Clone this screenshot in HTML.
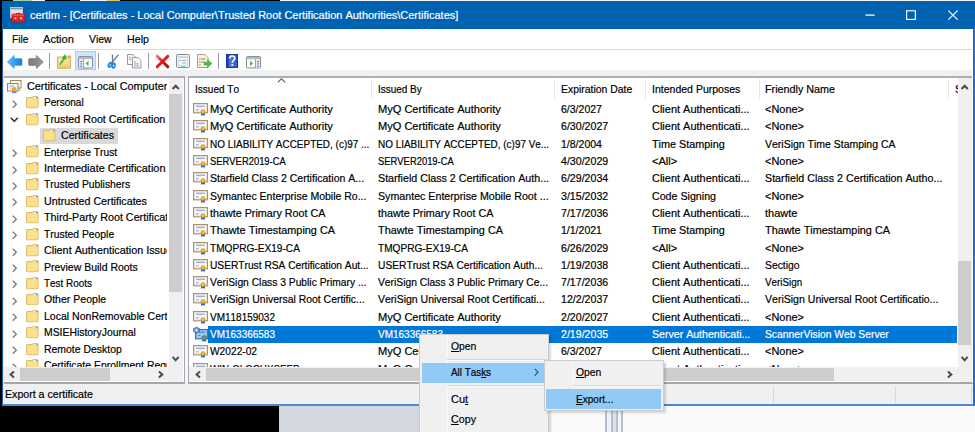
<!DOCTYPE html><html><head><meta charset="utf-8"><style>
html,body{margin:0;padding:0;width:975px;height:432px;overflow:hidden;background:#000}
#r{position:absolute;left:0;top:0;width:975px;height:432px;overflow:hidden;font-family:"Liberation Sans", sans-serif;font-size:11.5px;color:#000}
.t{position:absolute;white-space:nowrap;line-height:16px;font-kerning:none;transform-origin:0 0;-webkit-text-stroke:0.2px currentColor}
.clip{position:absolute;overflow:hidden}
svg{position:absolute;overflow:visible}
</style></head><body><div id="r"><div style="position:absolute;left:0px;top:0px;width:975px;height:432px;background:#000"></div>
<div style="position:absolute;left:279px;top:405px;width:140px;height:27px;background:#d3d7de"></div>
<div style="position:absolute;left:548px;top:405px;width:427px;height:27px;background:#fafafa"></div>
<div style="position:absolute;left:605px;top:411px;width:18px;height:21px;background:#eef3fa"></div>
<div style="position:absolute;left:605.2px;top:411px;width:1.7px;height:21px;background:#b4bfcf"></div>
<div style="position:absolute;left:611px;top:411px;width:1.7px;height:21px;background:#b4bfcf"></div>
<div style="position:absolute;left:616px;top:411px;width:1.7px;height:21px;background:#b4bfcf"></div>
<div style="position:absolute;left:621px;top:411px;width:1.7px;height:21px;background:#b4bfcf"></div>
<div style="position:absolute;left:612.5px;top:411px;width:3.5px;height:21px;background:#d8e2ee"></div>
<div style="position:absolute;left:2px;top:1px;width:973px;height:404px;background:#f0f0f0"></div>
<div style="position:absolute;left:2px;top:1px;width:1px;height:404px;background:#1a5fa8"></div>
<div style="position:absolute;left:2px;top:1px;width:973px;height:28px;background:#0063b1"></div>
<div style="position:absolute;left:13px;top:0px;width:19px;height:1px;background:#9ed4a4"></div>
<div style="position:absolute;left:32px;top:0px;width:13px;height:1px;background:#f4f4f4"></div>
<div style="position:absolute;left:80px;top:0px;width:27px;height:1px;background:#f4f4f4"></div>
<div style="position:absolute;left:107px;top:0px;width:13px;height:1px;background:#f0c050"></div>
<div style="position:absolute;left:280px;top:0px;width:695px;height:1px;background:#f4f4f4"></div>
<svg style="left:10px;top:7px" width="16" height="16" viewBox="0 0 16 16"><rect x="0.3" y="0.3" width="12.4" height="10.6" fill="#eef0f4" stroke="#c8ccd4" stroke-width="0.6"/><rect x="0.6" y="1" width="11.8" height="1.4" fill="#8890a0"/><rect x="1.2" y="3.6" width="10.5" height="0.6" fill="#b8c0cc"/><rect x="1.2" y="5.4" width="4" height="0.6" fill="#c0c8d4"/><path d="M5.2 7.2 Q8.3 4.8 11.4 7.2" fill="none" stroke="#404040" stroke-width="1"/><rect x="1.9" y="7" width="12.7" height="8" rx="0.8" fill="#e02424" stroke="#a81414" stroke-width="0.7"/><rect x="2.4" y="7.4" width="11.7" height="1.4" fill="#f05050"/><circle cx="5.5" cy="11.3" r="1" fill="#d8e8e8"/><circle cx="11" cy="11.3" r="1" fill="#d8e8e8"/></svg>
<div class="t" style="left:30px;top:7.33px;transform:scaleX(0.9546);color:#fff">certlm - [Certificates - Local Computer\Trusted Root Certification Authorities\Certificates]</div>
<svg style="left:860px;top:8px" width="110" height="16" viewBox="0 0 110 16"><rect x="5.5" y="6.4" width="9.2" height="1.4" fill="#e8f0fa"/><rect x="46.6" y="2.8" width="8.8" height="8.6" fill="none" stroke="#fff" stroke-width="1.15"/><path d="M88.3 2.6 L97.6 11.6 M97.6 2.6 L88.3 11.6" stroke="#fff" stroke-width="1.2"/></svg>
<div style="position:absolute;left:3px;top:29px;width:970px;height:20px;background:#fff"></div>
<div style="position:absolute;left:3px;top:49px;width:970px;height:1px;background:#d9d9d9"></div>
<div class="t" style="left:12px;top:30.53px;transform:scaleX(0.8886);">File</div>
<div class="t" style="left:43px;top:30.53px;transform:scaleX(0.9683);">Action</div>
<div class="t" style="left:89px;top:30.53px;transform:scaleX(0.9054);">View</div>
<div class="t" style="left:127px;top:30.53px;transform:scaleX(0.9287);">Help</div>
<div style="position:absolute;left:3px;top:50px;width:970px;height:20px;background:#fff"></div>
<div style="position:absolute;left:3px;top:70px;width:970px;height:6px;background:#f0f0f0"></div>
<div style="position:absolute;left:75px;top:51px;width:21px;height:19px;background:#cce8ff;border:1px solid #99d1ff;box-sizing:border-box"></div>
<div style="position:absolute;left:48.5px;top:53px;width:1.2px;height:16px;background:#9a9a9a"></div>
<div style="position:absolute;left:97.5px;top:53px;width:1.2px;height:16px;background:#9a9a9a"></div>
<div style="position:absolute;left:147.5px;top:53px;width:1.2px;height:16px;background:#9a9a9a"></div>
<div style="position:absolute;left:217.5px;top:53px;width:1.2px;height:16px;background:#9a9a9a"></div>
<svg style="left:0;top:0" width="0" height="0"><defs><linearGradient id="gb" x1="0" x2="1" y1="0" y2="0"><stop offset="0" stop-color="#5cc0fa"/><stop offset="1" stop-color="#1a78d8"/></linearGradient><linearGradient id="gg" x1="0" x2="1"><stop offset="0" stop-color="#7a7a7a"/><stop offset="1" stop-color="#9a9a9a"/></linearGradient><linearGradient id="gf" x1="0" x2="0" y1="0" y2="1"><stop offset="0" stop-color="#fdeab0"/><stop offset="1" stop-color="#f2cc6a"/></linearGradient><linearGradient id="gr" x1="0" x2="1" y1="0" y2="1"><stop offset="0" stop-color="#f27070"/><stop offset="0.5" stop-color="#e21a1a"/><stop offset="1" stop-color="#b00808"/></linearGradient><linearGradient id="gh" x1="0" x2="1"><stop offset="0" stop-color="#1a3aa8"/><stop offset="0.25" stop-color="#2a4ec0"/><stop offset="0.3" stop-color="#4a78e0"/><stop offset="1" stop-color="#2e58c8"/></linearGradient></defs></svg>
<svg style="left:7px;top:54.5px" width="16" height="14" viewBox="0 0 16 14"><path d="M0.3 7 L7.2 0.4 V3.6 H14 Q15 3.6 15 4.6 V9.4 Q15 10.4 14 10.4 H7.2 V13.6 Z" fill="url(#gb)" stroke="#3a98e8" stroke-width="0.6"/></svg>
<svg style="left:28px;top:54.5px" width="16" height="14" viewBox="0 0 16 14"><path d="M15.3 7 L8.4 0.4 V3.6 H1.6 Q0.6 3.6 0.6 4.6 V9.4 Q0.6 10.4 1.6 10.4 H8.4 V13.6 Z" fill="url(#gg)" stroke="#6a6a6a" stroke-width="0.6"/></svg>
<svg style="left:57px;top:54px" width="14" height="15" viewBox="0 0 14 15"><path d="M0.5 3 H9 L10 2 H13.5 V14.3 H0.5Z" fill="url(#gf)" stroke="#d2a850" stroke-width="0.9"/><rect x="11" y="2.8" width="1.6" height="1.2" fill="#4a8ad0"/><path d="M2.8 11.2 C3.6 8 4.8 6.3 6.6 5.2 L5.2 4.2 L8 0.6 L9.4 5.2 L7.8 4.8 C6.6 6.8 5 8.6 2.8 11.2Z" fill="#2cba2c" stroke="#1a9a1a" stroke-width="0.4"/></svg>
<svg style="left:78px;top:56px" width="15" height="12.5" viewBox="0 0 15 12.5"><rect x="0.5" y="0.5" width="14" height="11.5" rx="0.8" fill="#fafafa" stroke="#8a909a"/><rect x="1" y="1" width="13" height="2.2" fill="#b4bac2"/><rect x="1" y="3.2" width="4.2" height="8.3" fill="#e8ecf0"/><rect x="5.2" y="3.2" width="0.8" height="8.5" fill="#8a909a"/><rect x="2.2" y="5" width="2" height="1" fill="#4a7ad0"/><rect x="2.2" y="7.4" width="2" height="1" fill="#4a7ad0"/><rect x="2.2" y="9.8" width="2" height="1" fill="#4a7ad0"/><path d="M10.5 4.8 L7.6 7.4 L10.5 10Z" fill="#3cc03c"/></svg>
<svg style="left:107px;top:54px" width="13" height="15" viewBox="0 0 13 15"><path d="M5.4 0.4 L5.6 9 M11.6 0.6 L4.6 9" stroke="#707a88" stroke-width="1.3"/><ellipse cx="3" cy="10.8" rx="1.9" ry="3" transform="rotate(25 3 10.8)" fill="#1e90ea" stroke="#1470c8" stroke-width="0.5"/><ellipse cx="6.6" cy="11.6" rx="1.9" ry="3" transform="rotate(10 6.6 11.6)" fill="#1e90ea" stroke="#1470c8" stroke-width="0.5"/><ellipse cx="3.1" cy="11" rx="0.6" ry="1.1" fill="#d8f0ff"/><ellipse cx="6.6" cy="11.8" rx="0.6" ry="1.1" fill="#d8f0ff"/></svg>
<svg style="left:127px;top:54px" width="15" height="15" viewBox="0 0 15 15"><path d="M0.5 0.5 H6 L8 2.5 V10.5 H0.5Z" fill="#f6f6f6" stroke="#9a9a9a"/><path d="M5.5 3.5 H11 L14 6.5 V14 H5.5Z" fill="#f8f8f8" stroke="#9a9a9a"/><rect x="2" y="3" width="1.5" height="0.8" fill="#4a6ec8"/><rect x="2" y="5" width="2.5" height="0.8" fill="#7a8ed0"/><rect x="7" y="7.5" width="1.5" height="0.8" fill="#4a6ec8"/><rect x="7" y="9.5" width="5" height="0.8" fill="#7a8ed0"/><rect x="7" y="11.5" width="5" height="0.8" fill="#7a8ed0"/></svg>
<svg style="left:155px;top:54px" width="15" height="15" viewBox="0 0 15 15"><path d="M2.2 2.2 L12.8 12.8 M12.8 2.2 L2.2 12.8" stroke="url(#gr)" stroke-width="3" stroke-linecap="round"/></svg>
<svg style="left:176px;top:54px" width="14" height="14" viewBox="0 0 14 14"><rect x="0.5" y="0.5" width="13" height="13" rx="1.2" fill="#f2f4f6" stroke="#868c94"/><rect x="2.3" y="2.3" width="9.4" height="9.4" fill="#fafafa" stroke="#c0c6ce" stroke-width="0.6"/><rect x="2.5" y="2.5" width="9" height="1.5" fill="#d0d6de"/><rect x="3.5" y="6" width="1.5" height="1" fill="#30a0e0"/><rect x="6" y="6" width="4" height="1" fill="#a0a6b0"/><rect x="6" y="8.5" width="4" height="1" fill="#a0a6b0"/><rect x="5" y="12.3" width="4" height="1.6" fill="#30b8e8"/></svg>
<svg style="left:197px;top:54px" width="16" height="14" viewBox="0 0 16 14"><path d="M0.5 0.5 H8 L11 3.5 V13.5 H0.5Z" fill="#fbf6d8" stroke="#a8a288"/><rect x="2.3" y="4.5" width="1.2" height="1" fill="#505070"/><rect x="4.3" y="4.5" width="4" height="1" fill="#7070a0"/><rect x="2.3" y="7.5" width="1.2" height="1" fill="#505070"/><rect x="4.3" y="7.5" width="3" height="1" fill="#7070a0"/><rect x="2.3" y="10.5" width="1.2" height="1" fill="#505070"/><path d="M7 8.2 H10.6 V5.6 L15 9.6 L10.6 13.6 V11 H7Z" fill="#44c044" stroke="#2a9a2a" stroke-width="0.4"/></svg>
<svg style="left:226px;top:54px" width="12" height="14" viewBox="0 0 12 14"><rect x="0" y="0" width="12" height="14" fill="url(#gh)"/><rect x="0.4" y="0.4" width="11.2" height="13.2" fill="none" stroke="#1a2e90" stroke-width="0.8"/><path d="M3.6 4.4 Q3.8 2 6.2 2 Q8.8 2 8.8 4.3 Q8.8 5.6 7.4 6.6 Q6.4 7.3 6.4 8.8" fill="none" stroke="#fff" stroke-width="1.7"/><rect x="5.5" y="10" width="1.8" height="1.8" fill="#fff"/></svg>
<svg style="left:246px;top:56px" width="15" height="12.5" viewBox="0 0 15 12.5"><rect x="0.5" y="0.5" width="14" height="11.5" rx="0.8" fill="#fafafa" stroke="#8a909a"/><rect x="1" y="1" width="13" height="2.2" fill="#b4bac2"/><rect x="9.8" y="3.2" width="4.2" height="8.3" fill="#e8ecf0"/><rect x="9" y="3.2" width="0.8" height="8.5" fill="#8a909a"/><rect x="11" y="5" width="2" height="1" fill="#4a7ad0"/><rect x="11" y="7.4" width="2" height="1" fill="#4a7ad0"/><rect x="11" y="9.8" width="2" height="1" fill="#4a7ad0"/><path d="M4 4.8 L7 7.4 L4 10Z" fill="#3cc03c"/></svg>
<div style="position:absolute;left:3px;top:76px;width:182px;height:308px;background:#fff"></div>
<div style="position:absolute;left:3px;top:75.8px;width:182.2px;height:2.2px;background:#abb0b8"></div>
<div style="position:absolute;left:183.9px;top:75.8px;width:1.3px;height:308.2px;background:#a3a8b0"></div>
<div style="position:absolute;left:185.2px;top:78px;width:2.4px;height:304px;background:#f7f7f7"></div>
<div style="position:absolute;left:3px;top:382.2px;width:182.2px;height:1.8px;background:#a3a8b0"></div>
<div style="position:absolute;left:3px;top:76px;width:1px;height:308px;background:#e4e6ea"></div>
<div class="clip" style="left:4px;top:77px;width:163.3px;height:290px">
<svg style="left:3px;top:3.00px" width="15" height="14" viewBox="0 0 15 14"><rect x="3.5" y="0.5" width="10.5" height="7.5" fill="#fafafa" stroke="#a08a60"/><rect x="0.5" y="3.5" width="10.5" height="7.5" fill="#fcfcfc" stroke="#9c8258"/><rect x="2.5" y="5.5" width="5" height="1" fill="#8da0d8"/><rect x="2.5" y="7.5" width="3" height="1" fill="#b8c4e8"/><path d="M12 8 L13.5 11 L12 11 Z" fill="#e8a000"/><path d="M5.5 10 L5 13.5 L6.5 12.6 L7.2 13.5 L8 12.6 L9.5 13.5 L9 10Z" fill="#2a6ee8"/><circle cx="7.2" cy="9.5" r="2.4" fill="#eab010"/></svg>
<div class="t" style="left:23px;top:0.93px;transform:scaleX(0.9420);">Certificates - Local Computer</div>
<svg style="left:8px;top:22.82px" width="6" height="9" viewBox="0 0 6 9"><path d="M0.8 0.8 L4.3 4.3 L0.8 7.8" fill="none" stroke="#7a7a7a" stroke-width="1.35"/></svg>
<svg style="left:21.5px;top:19.22px" width="12.6" height="12.2" viewBox="0 0 13 13" preserveAspectRatio="none"><path d="M1.2 1.6 H6.2 L7.4 0.6 H11.6 Q12.5 0.6 12.5 1.6 V11.8 Q12.5 12.5 11.8 12.5 H1.2 Q0.5 12.5 0.5 11.8 V2.3 Q0.5 1.6 1.2 1.6Z" fill="#f3cf72" stroke="#d9b25c" stroke-width="0.9"/><path d="M1 2.4 H7 L8.4 3.6 H12 V12 H1Z" fill="#fbe08e"/><path d="M7.6 1 H11.8 V3 H8.4Z" fill="#fdf2cc"/><rect x="10.2" y="1" width="1.8" height="1.4" fill="#5a9ad8"/></svg>
<div class="t" style="left:40.3px;top:17.35px;transform:scaleX(0.8733);">Personal</div>
<svg style="left:6px;top:40.20px" width="9" height="6" viewBox="0 0 9 6"><path d="M0.8 0.8 L4.3 4.4 L7.8 0.8" fill="none" stroke="#383838" stroke-width="1.6"/></svg>
<svg style="left:21.5px;top:35.64px" width="12.6" height="12.2" viewBox="0 0 13 13" preserveAspectRatio="none"><path d="M1.2 1.6 H6.2 L7.4 0.6 H11.6 Q12.5 0.6 12.5 1.6 V11.8 Q12.5 12.5 11.8 12.5 H1.2 Q0.5 12.5 0.5 11.8 V2.3 Q0.5 1.6 1.2 1.6Z" fill="#f3cf72" stroke="#d9b25c" stroke-width="0.9"/><path d="M1 2.4 H7 L8.4 3.6 H12 V12 H1Z" fill="#fbe08e"/><path d="M7.6 1 H11.8 V3 H8.4Z" fill="#fdf2cc"/><rect x="10.2" y="1" width="1.8" height="1.4" fill="#5a9ad8"/></svg>
<div class="t" style="left:40.3px;top:33.77px;transform:scaleX(0.9302);">Trusted Root Certification Authorities</div>
<div style="position:absolute;left:36px;top:51.30000000000001px;width:78px;height:15.5px;background:#d9d9d9"></div>
<svg style="left:39.2px;top:52.06px" width="12.4" height="12.2" viewBox="0 0 13 13" preserveAspectRatio="none"><path d="M1.2 1.6 H6.2 L7.4 0.6 H11.6 Q12.5 0.6 12.5 1.6 V11.8 Q12.5 12.5 11.8 12.5 H1.2 Q0.5 12.5 0.5 11.8 V2.3 Q0.5 1.6 1.2 1.6Z" fill="#f3cf72" stroke="#d9b25c" stroke-width="0.9"/><path d="M1 2.4 H7 L8.4 3.6 H12 V12 H1Z" fill="#fbe08e"/><path d="M7.6 1 H11.8 V3 H8.4Z" fill="#fdf2cc"/><rect x="10.2" y="1" width="1.8" height="1.4" fill="#5a9ad8"/></svg>
<div class="t" style="left:57px;top:50.19px;transform:scaleX(0.9201);">Certificates</div>
<svg style="left:8px;top:72.08px" width="6" height="9" viewBox="0 0 6 9"><path d="M0.8 0.8 L4.3 4.3 L0.8 7.8" fill="none" stroke="#7a7a7a" stroke-width="1.35"/></svg>
<svg style="left:21.5px;top:68.48px" width="12.6" height="12.2" viewBox="0 0 13 13" preserveAspectRatio="none"><path d="M1.2 1.6 H6.2 L7.4 0.6 H11.6 Q12.5 0.6 12.5 1.6 V11.8 Q12.5 12.5 11.8 12.5 H1.2 Q0.5 12.5 0.5 11.8 V2.3 Q0.5 1.6 1.2 1.6Z" fill="#f3cf72" stroke="#d9b25c" stroke-width="0.9"/><path d="M1 2.4 H7 L8.4 3.6 H12 V12 H1Z" fill="#fbe08e"/><path d="M7.6 1 H11.8 V3 H8.4Z" fill="#fdf2cc"/><rect x="10.2" y="1" width="1.8" height="1.4" fill="#5a9ad8"/></svg>
<div class="t" style="left:40.3px;top:66.61px;transform:scaleX(0.8946);">Enterprise Trust</div>
<svg style="left:8px;top:88.50px" width="6" height="9" viewBox="0 0 6 9"><path d="M0.8 0.8 L4.3 4.3 L0.8 7.8" fill="none" stroke="#7a7a7a" stroke-width="1.35"/></svg>
<svg style="left:21.5px;top:84.90px" width="12.6" height="12.2" viewBox="0 0 13 13" preserveAspectRatio="none"><path d="M1.2 1.6 H6.2 L7.4 0.6 H11.6 Q12.5 0.6 12.5 1.6 V11.8 Q12.5 12.5 11.8 12.5 H1.2 Q0.5 12.5 0.5 11.8 V2.3 Q0.5 1.6 1.2 1.6Z" fill="#f3cf72" stroke="#d9b25c" stroke-width="0.9"/><path d="M1 2.4 H7 L8.4 3.6 H12 V12 H1Z" fill="#fbe08e"/><path d="M7.6 1 H11.8 V3 H8.4Z" fill="#fdf2cc"/><rect x="10.2" y="1" width="1.8" height="1.4" fill="#5a9ad8"/></svg>
<div class="t" style="left:40.3px;top:83.03px;transform:scaleX(0.9502);">Intermediate Certification Authorities</div>
<svg style="left:8px;top:104.92px" width="6" height="9" viewBox="0 0 6 9"><path d="M0.8 0.8 L4.3 4.3 L0.8 7.8" fill="none" stroke="#7a7a7a" stroke-width="1.35"/></svg>
<svg style="left:21.5px;top:101.32px" width="12.6" height="12.2" viewBox="0 0 13 13" preserveAspectRatio="none"><path d="M1.2 1.6 H6.2 L7.4 0.6 H11.6 Q12.5 0.6 12.5 1.6 V11.8 Q12.5 12.5 11.8 12.5 H1.2 Q0.5 12.5 0.5 11.8 V2.3 Q0.5 1.6 1.2 1.6Z" fill="#f3cf72" stroke="#d9b25c" stroke-width="0.9"/><path d="M1 2.4 H7 L8.4 3.6 H12 V12 H1Z" fill="#fbe08e"/><path d="M7.6 1 H11.8 V3 H8.4Z" fill="#fdf2cc"/><rect x="10.2" y="1" width="1.8" height="1.4" fill="#5a9ad8"/></svg>
<div class="t" style="left:40.3px;top:99.45px;transform:scaleX(0.8987);">Trusted Publishers</div>
<svg style="left:8px;top:121.34px" width="6" height="9" viewBox="0 0 6 9"><path d="M0.8 0.8 L4.3 4.3 L0.8 7.8" fill="none" stroke="#7a7a7a" stroke-width="1.35"/></svg>
<svg style="left:21.5px;top:117.74px" width="12.6" height="12.2" viewBox="0 0 13 13" preserveAspectRatio="none"><path d="M1.2 1.6 H6.2 L7.4 0.6 H11.6 Q12.5 0.6 12.5 1.6 V11.8 Q12.5 12.5 11.8 12.5 H1.2 Q0.5 12.5 0.5 11.8 V2.3 Q0.5 1.6 1.2 1.6Z" fill="#f3cf72" stroke="#d9b25c" stroke-width="0.9"/><path d="M1 2.4 H7 L8.4 3.6 H12 V12 H1Z" fill="#fbe08e"/><path d="M7.6 1 H11.8 V3 H8.4Z" fill="#fdf2cc"/><rect x="10.2" y="1" width="1.8" height="1.4" fill="#5a9ad8"/></svg>
<div class="t" style="left:40.3px;top:115.87px;transform:scaleX(0.9309);">Untrusted Certificates</div>
<svg style="left:8px;top:137.76px" width="6" height="9" viewBox="0 0 6 9"><path d="M0.8 0.8 L4.3 4.3 L0.8 7.8" fill="none" stroke="#7a7a7a" stroke-width="1.35"/></svg>
<svg style="left:21.5px;top:134.16px" width="12.6" height="12.2" viewBox="0 0 13 13" preserveAspectRatio="none"><path d="M1.2 1.6 H6.2 L7.4 0.6 H11.6 Q12.5 0.6 12.5 1.6 V11.8 Q12.5 12.5 11.8 12.5 H1.2 Q0.5 12.5 0.5 11.8 V2.3 Q0.5 1.6 1.2 1.6Z" fill="#f3cf72" stroke="#d9b25c" stroke-width="0.9"/><path d="M1 2.4 H7 L8.4 3.6 H12 V12 H1Z" fill="#fbe08e"/><path d="M7.6 1 H11.8 V3 H8.4Z" fill="#fdf2cc"/><rect x="10.2" y="1" width="1.8" height="1.4" fill="#5a9ad8"/></svg>
<div class="t" style="left:40.3px;top:132.29px;transform:scaleX(0.9350);">Third-Party Root Certification Authorities</div>
<svg style="left:8px;top:154.18px" width="6" height="9" viewBox="0 0 6 9"><path d="M0.8 0.8 L4.3 4.3 L0.8 7.8" fill="none" stroke="#7a7a7a" stroke-width="1.35"/></svg>
<svg style="left:21.5px;top:150.58px" width="12.6" height="12.2" viewBox="0 0 13 13" preserveAspectRatio="none"><path d="M1.2 1.6 H6.2 L7.4 0.6 H11.6 Q12.5 0.6 12.5 1.6 V11.8 Q12.5 12.5 11.8 12.5 H1.2 Q0.5 12.5 0.5 11.8 V2.3 Q0.5 1.6 1.2 1.6Z" fill="#f3cf72" stroke="#d9b25c" stroke-width="0.9"/><path d="M1 2.4 H7 L8.4 3.6 H12 V12 H1Z" fill="#fbe08e"/><path d="M7.6 1 H11.8 V3 H8.4Z" fill="#fdf2cc"/><rect x="10.2" y="1" width="1.8" height="1.4" fill="#5a9ad8"/></svg>
<div class="t" style="left:40.3px;top:148.71px;transform:scaleX(0.8997);">Trusted People</div>
<svg style="left:8px;top:170.60px" width="6" height="9" viewBox="0 0 6 9"><path d="M0.8 0.8 L4.3 4.3 L0.8 7.8" fill="none" stroke="#7a7a7a" stroke-width="1.35"/></svg>
<svg style="left:21.5px;top:167.00px" width="12.6" height="12.2" viewBox="0 0 13 13" preserveAspectRatio="none"><path d="M1.2 1.6 H6.2 L7.4 0.6 H11.6 Q12.5 0.6 12.5 1.6 V11.8 Q12.5 12.5 11.8 12.5 H1.2 Q0.5 12.5 0.5 11.8 V2.3 Q0.5 1.6 1.2 1.6Z" fill="#f3cf72" stroke="#d9b25c" stroke-width="0.9"/><path d="M1 2.4 H7 L8.4 3.6 H12 V12 H1Z" fill="#fbe08e"/><path d="M7.6 1 H11.8 V3 H8.4Z" fill="#fdf2cc"/><rect x="10.2" y="1" width="1.8" height="1.4" fill="#5a9ad8"/></svg>
<div class="t" style="left:40.3px;top:165.13px;transform:scaleX(0.9400);">Client Authentication Issuers</div>
<svg style="left:8px;top:187.02px" width="6" height="9" viewBox="0 0 6 9"><path d="M0.8 0.8 L4.3 4.3 L0.8 7.8" fill="none" stroke="#7a7a7a" stroke-width="1.35"/></svg>
<svg style="left:21.5px;top:183.42px" width="12.6" height="12.2" viewBox="0 0 13 13" preserveAspectRatio="none"><path d="M1.2 1.6 H6.2 L7.4 0.6 H11.6 Q12.5 0.6 12.5 1.6 V11.8 Q12.5 12.5 11.8 12.5 H1.2 Q0.5 12.5 0.5 11.8 V2.3 Q0.5 1.6 1.2 1.6Z" fill="#f3cf72" stroke="#d9b25c" stroke-width="0.9"/><path d="M1 2.4 H7 L8.4 3.6 H12 V12 H1Z" fill="#fbe08e"/><path d="M7.6 1 H11.8 V3 H8.4Z" fill="#fdf2cc"/><rect x="10.2" y="1" width="1.8" height="1.4" fill="#5a9ad8"/></svg>
<div class="t" style="left:40.3px;top:181.55px;transform:scaleX(0.9111);">Preview Build Roots</div>
<svg style="left:8px;top:203.44px" width="6" height="9" viewBox="0 0 6 9"><path d="M0.8 0.8 L4.3 4.3 L0.8 7.8" fill="none" stroke="#7a7a7a" stroke-width="1.35"/></svg>
<svg style="left:21.5px;top:199.84px" width="12.6" height="12.2" viewBox="0 0 13 13" preserveAspectRatio="none"><path d="M1.2 1.6 H6.2 L7.4 0.6 H11.6 Q12.5 0.6 12.5 1.6 V11.8 Q12.5 12.5 11.8 12.5 H1.2 Q0.5 12.5 0.5 11.8 V2.3 Q0.5 1.6 1.2 1.6Z" fill="#f3cf72" stroke="#d9b25c" stroke-width="0.9"/><path d="M1 2.4 H7 L8.4 3.6 H12 V12 H1Z" fill="#fbe08e"/><path d="M7.6 1 H11.8 V3 H8.4Z" fill="#fdf2cc"/><rect x="10.2" y="1" width="1.8" height="1.4" fill="#5a9ad8"/></svg>
<div class="t" style="left:40.3px;top:197.97px;transform:scaleX(0.8637);">Test Roots</div>
<svg style="left:8px;top:219.86px" width="6" height="9" viewBox="0 0 6 9"><path d="M0.8 0.8 L4.3 4.3 L0.8 7.8" fill="none" stroke="#7a7a7a" stroke-width="1.35"/></svg>
<svg style="left:21.5px;top:216.26px" width="12.6" height="12.2" viewBox="0 0 13 13" preserveAspectRatio="none"><path d="M1.2 1.6 H6.2 L7.4 0.6 H11.6 Q12.5 0.6 12.5 1.6 V11.8 Q12.5 12.5 11.8 12.5 H1.2 Q0.5 12.5 0.5 11.8 V2.3 Q0.5 1.6 1.2 1.6Z" fill="#f3cf72" stroke="#d9b25c" stroke-width="0.9"/><path d="M1 2.4 H7 L8.4 3.6 H12 V12 H1Z" fill="#fbe08e"/><path d="M7.6 1 H11.8 V3 H8.4Z" fill="#fdf2cc"/><rect x="10.2" y="1" width="1.8" height="1.4" fill="#5a9ad8"/></svg>
<div class="t" style="left:40.3px;top:214.39px;transform:scaleX(0.9162);">Other People</div>
<svg style="left:8px;top:236.28px" width="6" height="9" viewBox="0 0 6 9"><path d="M0.8 0.8 L4.3 4.3 L0.8 7.8" fill="none" stroke="#7a7a7a" stroke-width="1.35"/></svg>
<svg style="left:21.5px;top:232.68px" width="12.6" height="12.2" viewBox="0 0 13 13" preserveAspectRatio="none"><path d="M1.2 1.6 H6.2 L7.4 0.6 H11.6 Q12.5 0.6 12.5 1.6 V11.8 Q12.5 12.5 11.8 12.5 H1.2 Q0.5 12.5 0.5 11.8 V2.3 Q0.5 1.6 1.2 1.6Z" fill="#f3cf72" stroke="#d9b25c" stroke-width="0.9"/><path d="M1 2.4 H7 L8.4 3.6 H12 V12 H1Z" fill="#fbe08e"/><path d="M7.6 1 H11.8 V3 H8.4Z" fill="#fdf2cc"/><rect x="10.2" y="1" width="1.8" height="1.4" fill="#5a9ad8"/></svg>
<div class="t" style="left:40.3px;top:230.81px;transform:scaleX(0.9153);">Local NonRemovable Certificates</div>
<svg style="left:8px;top:252.70px" width="6" height="9" viewBox="0 0 6 9"><path d="M0.8 0.8 L4.3 4.3 L0.8 7.8" fill="none" stroke="#7a7a7a" stroke-width="1.35"/></svg>
<svg style="left:21.5px;top:249.10px" width="12.6" height="12.2" viewBox="0 0 13 13" preserveAspectRatio="none"><path d="M1.2 1.6 H6.2 L7.4 0.6 H11.6 Q12.5 0.6 12.5 1.6 V11.8 Q12.5 12.5 11.8 12.5 H1.2 Q0.5 12.5 0.5 11.8 V2.3 Q0.5 1.6 1.2 1.6Z" fill="#f3cf72" stroke="#d9b25c" stroke-width="0.9"/><path d="M1 2.4 H7 L8.4 3.6 H12 V12 H1Z" fill="#fbe08e"/><path d="M7.6 1 H11.8 V3 H8.4Z" fill="#fdf2cc"/><rect x="10.2" y="1" width="1.8" height="1.4" fill="#5a9ad8"/></svg>
<div class="t" style="left:40.3px;top:247.23px;transform:scaleX(0.9032);">MSIEHistoryJournal</div>
<svg style="left:8px;top:269.12px" width="6" height="9" viewBox="0 0 6 9"><path d="M0.8 0.8 L4.3 4.3 L0.8 7.8" fill="none" stroke="#7a7a7a" stroke-width="1.35"/></svg>
<svg style="left:21.5px;top:265.52px" width="12.6" height="12.2" viewBox="0 0 13 13" preserveAspectRatio="none"><path d="M1.2 1.6 H6.2 L7.4 0.6 H11.6 Q12.5 0.6 12.5 1.6 V11.8 Q12.5 12.5 11.8 12.5 H1.2 Q0.5 12.5 0.5 11.8 V2.3 Q0.5 1.6 1.2 1.6Z" fill="#f3cf72" stroke="#d9b25c" stroke-width="0.9"/><path d="M1 2.4 H7 L8.4 3.6 H12 V12 H1Z" fill="#fbe08e"/><path d="M7.6 1 H11.8 V3 H8.4Z" fill="#fdf2cc"/><rect x="10.2" y="1" width="1.8" height="1.4" fill="#5a9ad8"/></svg>
<div class="t" style="left:40.3px;top:263.65px;transform:scaleX(0.9082);">Remote Desktop</div>
<svg style="left:8px;top:285.54px" width="6" height="9" viewBox="0 0 6 9"><path d="M0.8 0.8 L4.3 4.3 L0.8 7.8" fill="none" stroke="#7a7a7a" stroke-width="1.35"/></svg>
<svg style="left:21.5px;top:281.94px" width="12.6" height="12.2" viewBox="0 0 13 13" preserveAspectRatio="none"><path d="M1.2 1.6 H6.2 L7.4 0.6 H11.6 Q12.5 0.6 12.5 1.6 V11.8 Q12.5 12.5 11.8 12.5 H1.2 Q0.5 12.5 0.5 11.8 V2.3 Q0.5 1.6 1.2 1.6Z" fill="#f3cf72" stroke="#d9b25c" stroke-width="0.9"/><path d="M1 2.4 H7 L8.4 3.6 H12 V12 H1Z" fill="#fbe08e"/><path d="M7.6 1 H11.8 V3 H8.4Z" fill="#fdf2cc"/><rect x="10.2" y="1" width="1.8" height="1.4" fill="#5a9ad8"/></svg>
<div class="t" style="left:40.3px;top:280.07px;transform:scaleX(0.9096);">Certificate Enrollment Requests</div>
</div>
<div style="position:absolute;left:169px;top:78px;width:14px;height:289px;background:#f0f0f0"></div>
<div style="position:absolute;left:169px;top:94px;width:13px;height:198px;background:#cdcdcd"></div>
<svg style="left:172px;top:83.5px" width="8" height="6" viewBox="0 0 8 6"><path d="M0.6 5 L3.7 1.7 L6.8 5" fill="none" stroke="#4a4a4a" stroke-width="2"/></svg>
<svg style="left:172px;top:356px" width="8" height="6" viewBox="0 0 8 6"><path d="M0.6 0.9 L3.6 4.3 L6.6 0.9" fill="none" stroke="#4a4a4a" stroke-width="2"/></svg>
<div style="position:absolute;left:4px;top:367px;width:165px;height:14px;background:#f0f0f0"></div>
<div style="position:absolute;left:20px;top:368px;width:90px;height:13px;background:#cdcdcd"></div>
<svg style="left:9px;top:370.5px" width="6" height="8" viewBox="0 0 6 8"><path d="M5 0.6 L1.6 3.6 L5 6.6" fill="none" stroke="#4a4a4a" stroke-width="2"/></svg>
<svg style="left:157.5px;top:370.5px" width="6" height="8" viewBox="0 0 6 8"><path d="M0.9 0.6 L4.3 3.6 L0.9 6.6" fill="none" stroke="#4a4a4a" stroke-width="2"/></svg>
<div style="position:absolute;left:169px;top:367px;width:14px;height:15px;background:#f0f0f0"></div>
<div style="position:absolute;left:188px;top:76px;width:785px;height:308px;background:#fff"></div>
<div style="position:absolute;left:187.6px;top:75.8px;width:785.4px;height:2.2px;background:#abb0b8"></div>
<div style="position:absolute;left:187.6px;top:75.8px;width:1.4px;height:308.2px;background:#a3a8b0"></div>
<div style="position:absolute;left:187.6px;top:382.2px;width:785.4px;height:1.8px;background:#a3a8b0"></div>
<div class="clip" style="left:189px;top:77px;width:769px;height:290px">
<div style="position:absolute;left:182.2px;top:2px;width:1px;height:20px;background:#e5e5e5"></div>
<div style="position:absolute;left:364.5px;top:2px;width:1px;height:20px;background:#e5e5e5"></div>
<div style="position:absolute;left:455.79999999999995px;top:2px;width:1px;height:20px;background:#e5e5e5"></div>
<div style="position:absolute;left:569.8px;top:2px;width:1px;height:20px;background:#e5e5e5"></div>
<div style="position:absolute;left:759.3px;top:2px;width:1px;height:20px;background:#e5e5e5"></div>
<div class="t" style="left:6.300000000000011px;top:3.93px;transform:scaleX(0.8719);">Issued To</div>
<div class="t" style="left:189px;top:3.93px;transform:scaleX(0.8662);">Issued By</div>
<div class="t" style="left:371.70000000000005px;top:3.93px;transform:scaleX(0.9065);">Expiration Date</div>
<div class="t" style="left:462.6px;top:3.93px;transform:scaleX(0.9150);">Intended Purposes</div>
<div class="t" style="left:576.4px;top:3.93px;transform:scaleX(0.9361);">Friendly Name</div>
<div class="t" style="left:766px;top:3.93px;transform:scaleX(0.9314);">Status</div>
<svg style="left:88px;top:1.00px" width="9" height="5" viewBox="0 0 9 5"><path d="M0.8 4.3 L4.5 0.8 L8.2 4.3" fill="none" stroke="#6a6a6a" stroke-width="1.2"/></svg>
<svg style="left:4px;top:26.10px" width="15" height="14" viewBox="0 0 15 14"><rect x="0.6" y="0.6" width="13.8" height="9.2" fill="#fbfbfb" stroke="#a8936c" stroke-width="1.2"/><rect x="1.6" y="1.6" width="11.8" height="7.2" fill="none" stroke="#e4dccc" stroke-width="0.5"/><rect x="3" y="2.6" width="9" height="1.3" fill="#96a6dc"/><rect x="5.5" y="4.6" width="3" height="0.7" fill="#c8d0ec"/><rect x="3" y="6.3" width="2.6" height="1.1" fill="#8a9ad6"/><path d="M8.4 9.6 L7.8 12.8 L9.3 12 L10 12.8 L10.7 12 L12.2 12.8 L11.6 9.6Z" fill="#1f62e0"/><circle cx="10" cy="8.6" r="2.4" fill="#d99a0c"/><circle cx="10" cy="8.4" r="1.4" fill="#f3c23a"/></svg>
<div class="clip" style="left:0px;top:0;width:182px;height:290px">
<div class="t" style="left:21px;top:24.13px;transform:scaleX(0.9608);">MyQ Certificate Authority</div>
</div>
<div class="clip" style="left:183px;top:0;width:182px;height:290px">
<div class="t" style="left:6px;top:24.13px;transform:scaleX(0.9608);">MyQ Certificate Authority</div>
</div>
<div class="clip" style="left:365px;top:0;width:91px;height:290px">
<div class="t" style="left:6.7000000000000455px;top:24.13px;transform:scaleX(0.9139);">6/3/2027</div>
</div>
<div class="clip" style="left:456px;top:0;width:114px;height:290px">
<div class="t" style="left:6.600000000000023px;top:24.13px;transform:scaleX(0.9543);">Client Authenticati...</div>
</div>
<div class="clip" style="left:570px;top:0;width:190px;height:290px">
<div class="t" style="left:6.399999999999977px;top:24.13px;transform:scaleX(0.9516);">&lt;None&gt;</div>
</div>
<svg style="left:4px;top:43.40px" width="15" height="14" viewBox="0 0 15 14"><rect x="0.6" y="0.6" width="13.8" height="9.2" fill="#fbfbfb" stroke="#a8936c" stroke-width="1.2"/><rect x="1.6" y="1.6" width="11.8" height="7.2" fill="none" stroke="#e4dccc" stroke-width="0.5"/><rect x="3" y="2.6" width="9" height="1.3" fill="#96a6dc"/><rect x="5.5" y="4.6" width="3" height="0.7" fill="#c8d0ec"/><rect x="3" y="6.3" width="2.6" height="1.1" fill="#8a9ad6"/><path d="M8.4 9.6 L7.8 12.8 L9.3 12 L10 12.8 L10.7 12 L12.2 12.8 L11.6 9.6Z" fill="#1f62e0"/><circle cx="10" cy="8.6" r="2.4" fill="#d99a0c"/><circle cx="10" cy="8.4" r="1.4" fill="#f3c23a"/></svg>
<div class="clip" style="left:0px;top:0;width:182px;height:290px">
<div class="t" style="left:21px;top:41.43px;transform:scaleX(0.9608);">MyQ Certificate Authority</div>
</div>
<div class="clip" style="left:183px;top:0;width:182px;height:290px">
<div class="t" style="left:6px;top:41.43px;transform:scaleX(0.9608);">MyQ Certificate Authority</div>
</div>
<div class="clip" style="left:365px;top:0;width:91px;height:290px">
<div class="t" style="left:6.7000000000000455px;top:41.43px;transform:scaleX(0.9226);">6/30/2027</div>
</div>
<div class="clip" style="left:456px;top:0;width:114px;height:290px">
<div class="t" style="left:6.600000000000023px;top:41.43px;transform:scaleX(0.9543);">Client Authenticati...</div>
</div>
<div class="clip" style="left:570px;top:0;width:190px;height:290px">
<div class="t" style="left:6.399999999999977px;top:41.43px;transform:scaleX(0.9516);">&lt;None&gt;</div>
</div>
<svg style="left:4px;top:60.70px" width="15" height="14" viewBox="0 0 15 14"><rect x="0.6" y="0.6" width="13.8" height="9.2" fill="#fbfbfb" stroke="#a8936c" stroke-width="1.2"/><rect x="1.6" y="1.6" width="11.8" height="7.2" fill="none" stroke="#e4dccc" stroke-width="0.5"/><rect x="3" y="2.6" width="9" height="1.3" fill="#96a6dc"/><rect x="5.5" y="4.6" width="3" height="0.7" fill="#c8d0ec"/><rect x="3" y="6.3" width="2.6" height="1.1" fill="#8a9ad6"/><path d="M8.4 9.6 L7.8 12.8 L9.3 12 L10 12.8 L10.7 12 L12.2 12.8 L11.6 9.6Z" fill="#1f62e0"/><circle cx="10" cy="8.6" r="2.4" fill="#d99a0c"/><circle cx="10" cy="8.4" r="1.4" fill="#f3c23a"/></svg>
<div class="clip" style="left:0px;top:0;width:182px;height:290px">
<div class="t" style="left:21px;top:58.73px;transform:scaleX(0.8658);">NO LIABILITY ACCEPTED, (c)97 ...</div>
</div>
<div class="clip" style="left:183px;top:0;width:182px;height:290px">
<div class="t" style="left:6px;top:58.73px;transform:scaleX(0.8638);">NO LIABILITY ACCEPTED, (c)97 Ve...</div>
</div>
<div class="clip" style="left:365px;top:0;width:91px;height:290px">
<div class="t" style="left:6.7000000000000455px;top:58.73px;transform:scaleX(0.9139);">1/8/2004</div>
</div>
<div class="clip" style="left:456px;top:0;width:114px;height:290px">
<div class="t" style="left:6.600000000000023px;top:58.73px;transform:scaleX(0.9398);">Time Stamping</div>
</div>
<div class="clip" style="left:570px;top:0;width:190px;height:290px">
<div class="t" style="left:6.399999999999977px;top:58.73px;transform:scaleX(0.9114);">VeriSign Time Stamping CA</div>
</div>
<svg style="left:4px;top:78.00px" width="15" height="14" viewBox="0 0 15 14"><rect x="0.6" y="0.6" width="13.8" height="9.2" fill="#fbfbfb" stroke="#a8936c" stroke-width="1.2"/><rect x="1.6" y="1.6" width="11.8" height="7.2" fill="none" stroke="#e4dccc" stroke-width="0.5"/><rect x="3" y="2.6" width="9" height="1.3" fill="#96a6dc"/><rect x="5.5" y="4.6" width="3" height="0.7" fill="#c8d0ec"/><rect x="3" y="6.3" width="2.6" height="1.1" fill="#8a9ad6"/><path d="M8.4 9.6 L7.8 12.8 L9.3 12 L10 12.8 L10.7 12 L12.2 12.8 L11.6 9.6Z" fill="#1f62e0"/><circle cx="10" cy="8.6" r="2.4" fill="#d99a0c"/><circle cx="10" cy="8.4" r="1.4" fill="#f3c23a"/></svg>
<div class="clip" style="left:0px;top:0;width:182px;height:290px">
<div class="t" style="left:21px;top:76.03px;transform:scaleX(0.8178);">SERVER2019-CA</div>
</div>
<div class="clip" style="left:183px;top:0;width:182px;height:290px">
<div class="t" style="left:6px;top:76.03px;transform:scaleX(0.8178);">SERVER2019-CA</div>
</div>
<div class="clip" style="left:365px;top:0;width:91px;height:290px">
<div class="t" style="left:6.7000000000000455px;top:76.03px;transform:scaleX(0.9226);">4/30/2029</div>
</div>
<div class="clip" style="left:456px;top:0;width:114px;height:290px">
<div class="t" style="left:6.600000000000023px;top:76.03px;transform:scaleX(0.9638);">&lt;All&gt;</div>
</div>
<div class="clip" style="left:570px;top:0;width:190px;height:290px">
<div class="t" style="left:6.399999999999977px;top:76.03px;transform:scaleX(0.9516);">&lt;None&gt;</div>
</div>
<svg style="left:4px;top:95.30px" width="15" height="14" viewBox="0 0 15 14"><rect x="0.6" y="0.6" width="13.8" height="9.2" fill="#fbfbfb" stroke="#a8936c" stroke-width="1.2"/><rect x="1.6" y="1.6" width="11.8" height="7.2" fill="none" stroke="#e4dccc" stroke-width="0.5"/><rect x="3" y="2.6" width="9" height="1.3" fill="#96a6dc"/><rect x="5.5" y="4.6" width="3" height="0.7" fill="#c8d0ec"/><rect x="3" y="6.3" width="2.6" height="1.1" fill="#8a9ad6"/><path d="M8.4 9.6 L7.8 12.8 L9.3 12 L10 12.8 L10.7 12 L12.2 12.8 L11.6 9.6Z" fill="#1f62e0"/><circle cx="10" cy="8.6" r="2.4" fill="#d99a0c"/><circle cx="10" cy="8.4" r="1.4" fill="#f3c23a"/></svg>
<div class="clip" style="left:0px;top:0;width:182px;height:290px">
<div class="t" style="left:21px;top:93.33px;transform:scaleX(0.9169);">Starfield Class 2 Certification A...</div>
</div>
<div class="clip" style="left:183px;top:0;width:182px;height:290px">
<div class="t" style="left:6px;top:93.33px;transform:scaleX(0.9294);">Starfield Class 2 Certification Auth...</div>
</div>
<div class="clip" style="left:365px;top:0;width:91px;height:290px">
<div class="t" style="left:6.7000000000000455px;top:93.33px;transform:scaleX(0.9226);">6/29/2034</div>
</div>
<div class="clip" style="left:456px;top:0;width:114px;height:290px">
<div class="t" style="left:6.600000000000023px;top:93.33px;transform:scaleX(0.9543);">Client Authenticati...</div>
</div>
<div class="clip" style="left:570px;top:0;width:190px;height:290px">
<div class="t" style="left:6.399999999999977px;top:93.33px;transform:scaleX(0.9312);">Starfield Class 2 Certification Autho...</div>
</div>
<svg style="left:4px;top:112.60px" width="15" height="14" viewBox="0 0 15 14"><rect x="0.6" y="0.6" width="13.8" height="9.2" fill="#fbfbfb" stroke="#a8936c" stroke-width="1.2"/><rect x="1.6" y="1.6" width="11.8" height="7.2" fill="none" stroke="#e4dccc" stroke-width="0.5"/><rect x="3" y="2.6" width="9" height="1.3" fill="#96a6dc"/><rect x="5.5" y="4.6" width="3" height="0.7" fill="#c8d0ec"/><rect x="3" y="6.3" width="2.6" height="1.1" fill="#8a9ad6"/><path d="M8.4 9.6 L7.8 12.8 L9.3 12 L10 12.8 L10.7 12 L12.2 12.8 L11.6 9.6Z" fill="#1f62e0"/><circle cx="10" cy="8.6" r="2.4" fill="#d99a0c"/><circle cx="10" cy="8.4" r="1.4" fill="#f3c23a"/></svg>
<div class="clip" style="left:0px;top:0;width:182px;height:290px">
<div class="t" style="left:21px;top:110.63px;transform:scaleX(0.9133);">Symantec Enterprise Mobile Ro...</div>
</div>
<div class="clip" style="left:183px;top:0;width:182px;height:290px">
<div class="t" style="left:6px;top:110.63px;transform:scaleX(0.9268);">Symantec Enterprise Mobile Root ...</div>
</div>
<div class="clip" style="left:365px;top:0;width:91px;height:290px">
<div class="t" style="left:6.7000000000000455px;top:110.63px;transform:scaleX(0.9226);">3/15/2032</div>
</div>
<div class="clip" style="left:456px;top:0;width:114px;height:290px">
<div class="t" style="left:6.600000000000023px;top:110.63px;transform:scaleX(0.9266);">Code Signing</div>
</div>
<div class="clip" style="left:570px;top:0;width:190px;height:290px">
<div class="t" style="left:6.399999999999977px;top:110.63px;transform:scaleX(0.9516);">&lt;None&gt;</div>
</div>
<svg style="left:4px;top:129.90px" width="15" height="14" viewBox="0 0 15 14"><rect x="0.6" y="0.6" width="13.8" height="9.2" fill="#fbfbfb" stroke="#a8936c" stroke-width="1.2"/><rect x="1.6" y="1.6" width="11.8" height="7.2" fill="none" stroke="#e4dccc" stroke-width="0.5"/><rect x="3" y="2.6" width="9" height="1.3" fill="#96a6dc"/><rect x="5.5" y="4.6" width="3" height="0.7" fill="#c8d0ec"/><rect x="3" y="6.3" width="2.6" height="1.1" fill="#8a9ad6"/><path d="M8.4 9.6 L7.8 12.8 L9.3 12 L10 12.8 L10.7 12 L12.2 12.8 L11.6 9.6Z" fill="#1f62e0"/><circle cx="10" cy="8.6" r="2.4" fill="#d99a0c"/><circle cx="10" cy="8.4" r="1.4" fill="#f3c23a"/></svg>
<div class="clip" style="left:0px;top:0;width:182px;height:290px">
<div class="t" style="left:21px;top:127.93px;transform:scaleX(0.9358);">thawte Primary Root CA</div>
</div>
<div class="clip" style="left:183px;top:0;width:182px;height:290px">
<div class="t" style="left:6px;top:127.93px;transform:scaleX(0.9358);">thawte Primary Root CA</div>
</div>
<div class="clip" style="left:365px;top:0;width:91px;height:290px">
<div class="t" style="left:6.7000000000000455px;top:127.93px;transform:scaleX(0.9226);">7/17/2036</div>
</div>
<div class="clip" style="left:456px;top:0;width:114px;height:290px">
<div class="t" style="left:6.600000000000023px;top:127.93px;transform:scaleX(0.9543);">Client Authenticati...</div>
</div>
<div class="clip" style="left:570px;top:0;width:190px;height:290px">
<div class="t" style="left:6.399999999999977px;top:127.93px;transform:scaleX(0.9574);">thawte</div>
</div>
<svg style="left:4px;top:147.20px" width="15" height="14" viewBox="0 0 15 14"><rect x="0.6" y="0.6" width="13.8" height="9.2" fill="#fbfbfb" stroke="#a8936c" stroke-width="1.2"/><rect x="1.6" y="1.6" width="11.8" height="7.2" fill="none" stroke="#e4dccc" stroke-width="0.5"/><rect x="3" y="2.6" width="9" height="1.3" fill="#96a6dc"/><rect x="5.5" y="4.6" width="3" height="0.7" fill="#c8d0ec"/><rect x="3" y="6.3" width="2.6" height="1.1" fill="#8a9ad6"/><path d="M8.4 9.6 L7.8 12.8 L9.3 12 L10 12.8 L10.7 12 L12.2 12.8 L11.6 9.6Z" fill="#1f62e0"/><circle cx="10" cy="8.6" r="2.4" fill="#d99a0c"/><circle cx="10" cy="8.4" r="1.4" fill="#f3c23a"/></svg>
<div class="clip" style="left:0px;top:0;width:182px;height:290px">
<div class="t" style="left:21px;top:145.23px;transform:scaleX(0.9449);">Thawte Timestamping CA</div>
</div>
<div class="clip" style="left:183px;top:0;width:182px;height:290px">
<div class="t" style="left:6px;top:145.23px;transform:scaleX(0.9449);">Thawte Timestamping CA</div>
</div>
<div class="clip" style="left:365px;top:0;width:91px;height:290px">
<div class="t" style="left:6.7000000000000455px;top:145.23px;transform:scaleX(0.9139);">1/1/2021</div>
</div>
<div class="clip" style="left:456px;top:0;width:114px;height:290px">
<div class="t" style="left:6.600000000000023px;top:145.23px;transform:scaleX(0.9398);">Time Stamping</div>
</div>
<div class="clip" style="left:570px;top:0;width:190px;height:290px">
<div class="t" style="left:6.399999999999977px;top:145.23px;transform:scaleX(0.9449);">Thawte Timestamping CA</div>
</div>
<svg style="left:4px;top:164.50px" width="15" height="14" viewBox="0 0 15 14"><rect x="0.6" y="0.6" width="13.8" height="9.2" fill="#fbfbfb" stroke="#a8936c" stroke-width="1.2"/><rect x="1.6" y="1.6" width="11.8" height="7.2" fill="none" stroke="#e4dccc" stroke-width="0.5"/><rect x="3" y="2.6" width="9" height="1.3" fill="#96a6dc"/><rect x="5.5" y="4.6" width="3" height="0.7" fill="#c8d0ec"/><rect x="3" y="6.3" width="2.6" height="1.1" fill="#8a9ad6"/><path d="M8.4 9.6 L7.8 12.8 L9.3 12 L10 12.8 L10.7 12 L12.2 12.8 L11.6 9.6Z" fill="#1f62e0"/><circle cx="10" cy="8.6" r="2.4" fill="#d99a0c"/><circle cx="10" cy="8.4" r="1.4" fill="#f3c23a"/></svg>
<div class="clip" style="left:0px;top:0;width:182px;height:290px">
<div class="t" style="left:21px;top:162.53px;transform:scaleX(0.8792);">TMQPRG-EX19-CA</div>
</div>
<div class="clip" style="left:183px;top:0;width:182px;height:290px">
<div class="t" style="left:6px;top:162.53px;transform:scaleX(0.8792);">TMQPRG-EX19-CA</div>
</div>
<div class="clip" style="left:365px;top:0;width:91px;height:290px">
<div class="t" style="left:6.7000000000000455px;top:162.53px;transform:scaleX(0.9226);">6/26/2029</div>
</div>
<div class="clip" style="left:456px;top:0;width:114px;height:290px">
<div class="t" style="left:6.600000000000023px;top:162.53px;transform:scaleX(0.9638);">&lt;All&gt;</div>
</div>
<div class="clip" style="left:570px;top:0;width:190px;height:290px">
<div class="t" style="left:6.399999999999977px;top:162.53px;transform:scaleX(0.9516);">&lt;None&gt;</div>
</div>
<svg style="left:4px;top:181.80px" width="15" height="14" viewBox="0 0 15 14"><rect x="0.6" y="0.6" width="13.8" height="9.2" fill="#fbfbfb" stroke="#a8936c" stroke-width="1.2"/><rect x="1.6" y="1.6" width="11.8" height="7.2" fill="none" stroke="#e4dccc" stroke-width="0.5"/><rect x="3" y="2.6" width="9" height="1.3" fill="#96a6dc"/><rect x="5.5" y="4.6" width="3" height="0.7" fill="#c8d0ec"/><rect x="3" y="6.3" width="2.6" height="1.1" fill="#8a9ad6"/><path d="M8.4 9.6 L7.8 12.8 L9.3 12 L10 12.8 L10.7 12 L12.2 12.8 L11.6 9.6Z" fill="#1f62e0"/><circle cx="10" cy="8.6" r="2.4" fill="#d99a0c"/><circle cx="10" cy="8.4" r="1.4" fill="#f3c23a"/></svg>
<div class="clip" style="left:0px;top:0;width:182px;height:290px">
<div class="t" style="left:21px;top:179.83px;transform:scaleX(0.8865);">USERTrust RSA Certification Aut...</div>
</div>
<div class="clip" style="left:183px;top:0;width:182px;height:290px">
<div class="t" style="left:6px;top:179.83px;transform:scaleX(0.8899);">USERTrust RSA Certification Auth...</div>
</div>
<div class="clip" style="left:365px;top:0;width:91px;height:290px">
<div class="t" style="left:6.7000000000000455px;top:179.83px;transform:scaleX(0.9226);">1/19/2038</div>
</div>
<div class="clip" style="left:456px;top:0;width:114px;height:290px">
<div class="t" style="left:6.600000000000023px;top:179.83px;transform:scaleX(0.9543);">Client Authenticati...</div>
</div>
<div class="clip" style="left:570px;top:0;width:190px;height:290px">
<div class="t" style="left:6.399999999999977px;top:179.83px;transform:scaleX(0.9005);">Sectigo</div>
</div>
<svg style="left:4px;top:199.10px" width="15" height="14" viewBox="0 0 15 14"><rect x="0.6" y="0.6" width="13.8" height="9.2" fill="#fbfbfb" stroke="#a8936c" stroke-width="1.2"/><rect x="1.6" y="1.6" width="11.8" height="7.2" fill="none" stroke="#e4dccc" stroke-width="0.5"/><rect x="3" y="2.6" width="9" height="1.3" fill="#96a6dc"/><rect x="5.5" y="4.6" width="3" height="0.7" fill="#c8d0ec"/><rect x="3" y="6.3" width="2.6" height="1.1" fill="#8a9ad6"/><path d="M8.4 9.6 L7.8 12.8 L9.3 12 L10 12.8 L10.7 12 L12.2 12.8 L11.6 9.6Z" fill="#1f62e0"/><circle cx="10" cy="8.6" r="2.4" fill="#d99a0c"/><circle cx="10" cy="8.4" r="1.4" fill="#f3c23a"/></svg>
<div class="clip" style="left:0px;top:0;width:182px;height:290px">
<div class="t" style="left:21px;top:197.13px;transform:scaleX(0.8934);">VeriSign Class 3 Public Primary ...</div>
</div>
<div class="clip" style="left:183px;top:0;width:182px;height:290px">
<div class="t" style="left:6px;top:197.13px;transform:scaleX(0.8958);">VeriSign Class 3 Public Primary Ce...</div>
</div>
<div class="clip" style="left:365px;top:0;width:91px;height:290px">
<div class="t" style="left:6.7000000000000455px;top:197.13px;transform:scaleX(0.9226);">7/17/2036</div>
</div>
<div class="clip" style="left:456px;top:0;width:114px;height:290px">
<div class="t" style="left:6.600000000000023px;top:197.13px;transform:scaleX(0.9543);">Client Authenticati...</div>
</div>
<div class="clip" style="left:570px;top:0;width:190px;height:290px">
<div class="t" style="left:6.399999999999977px;top:197.13px;transform:scaleX(0.8543);">VeriSign</div>
</div>
<svg style="left:4px;top:216.40px" width="15" height="14" viewBox="0 0 15 14"><rect x="0.6" y="0.6" width="13.8" height="9.2" fill="#fbfbfb" stroke="#a8936c" stroke-width="1.2"/><rect x="1.6" y="1.6" width="11.8" height="7.2" fill="none" stroke="#e4dccc" stroke-width="0.5"/><rect x="3" y="2.6" width="9" height="1.3" fill="#96a6dc"/><rect x="5.5" y="4.6" width="3" height="0.7" fill="#c8d0ec"/><rect x="3" y="6.3" width="2.6" height="1.1" fill="#8a9ad6"/><path d="M8.4 9.6 L7.8 12.8 L9.3 12 L10 12.8 L10.7 12 L12.2 12.8 L11.6 9.6Z" fill="#1f62e0"/><circle cx="10" cy="8.6" r="2.4" fill="#d99a0c"/><circle cx="10" cy="8.4" r="1.4" fill="#f3c23a"/></svg>
<div class="clip" style="left:0px;top:0;width:182px;height:290px">
<div class="t" style="left:21px;top:214.43px;transform:scaleX(0.9068);">VeriSign Universal Root Certific...</div>
</div>
<div class="clip" style="left:183px;top:0;width:182px;height:290px">
<div class="t" style="left:6px;top:214.43px;transform:scaleX(0.9126);">VeriSign Universal Root Certificati...</div>
</div>
<div class="clip" style="left:365px;top:0;width:91px;height:290px">
<div class="t" style="left:6.7000000000000455px;top:214.43px;transform:scaleX(0.9226);">12/2/2037</div>
</div>
<div class="clip" style="left:456px;top:0;width:114px;height:290px">
<div class="t" style="left:6.600000000000023px;top:214.43px;transform:scaleX(0.9543);">Client Authenticati...</div>
</div>
<div class="clip" style="left:570px;top:0;width:190px;height:290px">
<div class="t" style="left:6.399999999999977px;top:214.43px;transform:scaleX(0.9166);">VeriSign Universal Root Certificatio...</div>
</div>
<svg style="left:4px;top:233.70px" width="15" height="14" viewBox="0 0 15 14"><rect x="0.6" y="0.6" width="13.8" height="9.2" fill="#fbfbfb" stroke="#a8936c" stroke-width="1.2"/><rect x="1.6" y="1.6" width="11.8" height="7.2" fill="none" stroke="#e4dccc" stroke-width="0.5"/><rect x="3" y="2.6" width="9" height="1.3" fill="#96a6dc"/><rect x="5.5" y="4.6" width="3" height="0.7" fill="#c8d0ec"/><rect x="3" y="6.3" width="2.6" height="1.1" fill="#8a9ad6"/><path d="M8.4 9.6 L7.8 12.8 L9.3 12 L10 12.8 L10.7 12 L12.2 12.8 L11.6 9.6Z" fill="#1f62e0"/><circle cx="10" cy="8.6" r="2.4" fill="#d99a0c"/><circle cx="10" cy="8.4" r="1.4" fill="#f3c23a"/></svg>
<div class="clip" style="left:0px;top:0;width:182px;height:290px">
<div class="t" style="left:21px;top:231.73px;transform:scaleX(0.8686);">VM118159032</div>
</div>
<div class="clip" style="left:183px;top:0;width:182px;height:290px">
<div class="t" style="left:6px;top:231.73px;transform:scaleX(0.9608);">MyQ Certificate Authority</div>
</div>
<div class="clip" style="left:365px;top:0;width:91px;height:290px">
<div class="t" style="left:6.7000000000000455px;top:231.73px;transform:scaleX(0.9226);">2/20/2027</div>
</div>
<div class="clip" style="left:456px;top:0;width:114px;height:290px">
<div class="t" style="left:6.600000000000023px;top:231.73px;transform:scaleX(0.9543);">Client Authenticati...</div>
</div>
<div class="clip" style="left:570px;top:0;width:190px;height:290px">
<div class="t" style="left:6.399999999999977px;top:231.73px;transform:scaleX(0.9516);">&lt;None&gt;</div>
</div>
<div style="position:absolute;left:19px;top:248.60px;width:748.5px;height:17.2px;background:#0078d7"></div>
<svg style="left:4px;top:249.60px" width="15" height="16" viewBox="0 0 15 16"><rect x="2.6" y="2.6" width="12" height="9.2" fill="#9cc8f2" stroke="#4a70a8" stroke-width="1.2"/><rect x="5" y="4.6" width="7" height="1.2" fill="#5a8ad8"/><rect x="5" y="8" width="2.4" height="1" fill="#5a8ad8"/><path d="M9.6 11.6 L9 14.8 L10.5 14 L11.2 14.8 L11.9 14 L13.4 14.8 L12.8 11.6Z" fill="#1f62e0"/><circle cx="11.2" cy="10.8" r="2.3" fill="#6a9a70" stroke="#3a6a70" stroke-width="0.6"/><path d="M3.5 0.3 L6.4 1.6 L6.4 4.6 L3.5 6.2 L0.6 4.6 L0.6 1.6Z" fill="#7aa8d8" stroke="#2a5a98" stroke-width="0.8"/><circle cx="3.5" cy="3.2" r="1" fill="#d8ecff"/></svg>
<div class="clip" style="left:0px;top:0;width:182px;height:290px">
<div class="t" style="left:21px;top:249.03px;transform:scaleX(0.8686);color:#fff">VM163366583</div>
</div>
<div class="clip" style="left:183px;top:0;width:182px;height:290px">
<div class="t" style="left:6px;top:249.03px;transform:scaleX(0.8686);color:#fff">VM163366583</div>
</div>
<div class="clip" style="left:365px;top:0;width:91px;height:290px">
<div class="t" style="left:6.7000000000000455px;top:249.03px;transform:scaleX(0.9226);color:#fff">2/19/2035</div>
</div>
<div class="clip" style="left:456px;top:0;width:114px;height:290px">
<div class="t" style="left:6.600000000000023px;top:249.03px;transform:scaleX(0.9210);color:#fff">Server Authenticati...</div>
</div>
<div class="clip" style="left:570px;top:0;width:190px;height:290px">
<div class="t" style="left:6.399999999999977px;top:249.03px;transform:scaleX(0.8961);color:#fff">ScannerVision Web Server</div>
</div>
<svg style="left:4px;top:268.30px" width="15" height="14" viewBox="0 0 15 14"><rect x="0.6" y="0.6" width="13.8" height="9.2" fill="#fbfbfb" stroke="#a8936c" stroke-width="1.2"/><rect x="1.6" y="1.6" width="11.8" height="7.2" fill="none" stroke="#e4dccc" stroke-width="0.5"/><rect x="3" y="2.6" width="9" height="1.3" fill="#96a6dc"/><rect x="5.5" y="4.6" width="3" height="0.7" fill="#c8d0ec"/><rect x="3" y="6.3" width="2.6" height="1.1" fill="#8a9ad6"/><path d="M8.4 9.6 L7.8 12.8 L9.3 12 L10 12.8 L10.7 12 L12.2 12.8 L11.6 9.6Z" fill="#1f62e0"/><circle cx="10" cy="8.6" r="2.4" fill="#d99a0c"/><circle cx="10" cy="8.4" r="1.4" fill="#f3c23a"/></svg>
<div class="clip" style="left:0px;top:0;width:182px;height:290px">
<div class="t" style="left:21px;top:266.33px;transform:scaleX(0.8863);">W2022-02</div>
</div>
<div class="clip" style="left:183px;top:0;width:182px;height:290px">
<div class="t" style="left:6px;top:266.33px;transform:scaleX(0.9608);">MyQ Certificate Authority</div>
</div>
<div class="clip" style="left:365px;top:0;width:91px;height:290px">
<div class="t" style="left:6.7000000000000455px;top:266.33px;transform:scaleX(0.9139);">6/3/2027</div>
</div>
<div class="clip" style="left:456px;top:0;width:114px;height:290px">
<div class="t" style="left:6.600000000000023px;top:266.33px;transform:scaleX(0.9543);">Client Authenticati...</div>
</div>
<div class="clip" style="left:570px;top:0;width:190px;height:290px">
<div class="t" style="left:6.399999999999977px;top:266.33px;transform:scaleX(0.9516);">&lt;None&gt;</div>
</div>
<svg style="left:4px;top:285.60px" width="15" height="14" viewBox="0 0 15 14"><rect x="0.6" y="0.6" width="13.8" height="9.2" fill="#fbfbfb" stroke="#a8936c" stroke-width="1.2"/><rect x="1.6" y="1.6" width="11.8" height="7.2" fill="none" stroke="#e4dccc" stroke-width="0.5"/><rect x="3" y="2.6" width="9" height="1.3" fill="#96a6dc"/><rect x="5.5" y="4.6" width="3" height="0.7" fill="#c8d0ec"/><rect x="3" y="6.3" width="2.6" height="1.1" fill="#8a9ad6"/><path d="M8.4 9.6 L7.8 12.8 L9.3 12 L10 12.8 L10.7 12 L12.2 12.8 L11.6 9.6Z" fill="#1f62e0"/><circle cx="10" cy="8.6" r="2.4" fill="#d99a0c"/><circle cx="10" cy="8.4" r="1.4" fill="#f3c23a"/></svg>
<div class="clip" style="left:0px;top:0;width:182px;height:290px">
<div class="t" style="left:21px;top:283.63px;transform:scaleX(0.8483);">WIN-OLQCHXSEEP</div>
</div>
<div class="clip" style="left:183px;top:0;width:182px;height:290px">
<div class="t" style="left:6px;top:283.63px;transform:scaleX(0.9608);">MyQ Certificate Authority</div>
</div>
<div class="clip" style="left:365px;top:0;width:91px;height:290px">
<div class="t" style="left:6.7000000000000455px;top:283.63px;transform:scaleX(0.9139);">6/3/2027</div>
</div>
<div class="clip" style="left:456px;top:0;width:114px;height:290px">
<div class="t" style="left:6.600000000000023px;top:283.63px;transform:scaleX(0.9543);">Client Authenticati...</div>
</div>
<div class="clip" style="left:570px;top:0;width:190px;height:290px">
<div class="t" style="left:6.399999999999977px;top:283.63px;transform:scaleX(0.9516);">&lt;None&gt;</div>
</div>
</div>
<div style="position:absolute;left:958px;top:78px;width:14px;height:289px;background:#f0f0f0"></div>
<div style="position:absolute;left:958px;top:261px;width:13px;height:83.5px;background:#cdcdcd"></div>
<svg style="left:961px;top:83.5px" width="8" height="6" viewBox="0 0 8 6"><path d="M0.6 5 L3.7 1.7 L6.8 5" fill="none" stroke="#4a4a4a" stroke-width="2"/></svg>
<svg style="left:961px;top:356px" width="8" height="6" viewBox="0 0 8 6"><path d="M0.6 0.9 L3.6 4.3 L6.6 0.9" fill="none" stroke="#4a4a4a" stroke-width="2"/></svg>
<div style="position:absolute;left:189px;top:367px;width:769px;height:14px;background:#f0f0f0"></div>
<div style="position:absolute;left:206px;top:368px;width:628px;height:13px;background:#cdcdcd"></div>
<svg style="left:194.5px;top:370.5px" width="6" height="8" viewBox="0 0 6 8"><path d="M5 0.6 L1.6 3.6 L5 6.6" fill="none" stroke="#4a4a4a" stroke-width="2"/></svg>
<svg style="left:946.5px;top:370.5px" width="6" height="8" viewBox="0 0 6 8"><path d="M0.9 0.6 L4.3 3.6 L0.9 6.6" fill="none" stroke="#4a4a4a" stroke-width="2"/></svg>
<div style="position:absolute;left:958px;top:367px;width:14px;height:15px;background:#f0f0f0"></div>
<div style="position:absolute;left:3px;top:384px;width:970px;height:20px;background:#f0f0f0"></div>
<div style="position:absolute;left:773px;top:386px;width:1px;height:17px;background:#d7d7d7"></div>
<div style="position:absolute;left:895px;top:386px;width:1px;height:17px;background:#d7d7d7"></div>
<div style="position:absolute;left:2px;top:404.4px;width:973px;height:1.5px;background:#4a8ad0"></div>
<div class="t" style="left:5px;top:386.33px;transform:scaleX(0.9224);">Export a certificate</div>
<div style="position:absolute;left:972px;top:29px;width:1px;height:354px;background:#ffffff"></div>
<div style="position:absolute;left:971px;top:386px;width:1px;height:17px;background:#dadada"></div>
<div style="position:absolute;left:973px;top:29px;width:2px;height:376px;background:#2a6cc0"></div>
<div style="position:absolute;left:419px;top:333.7px;width:130px;height:100px;background:#f0f0f0;border:1px solid #cccccc;box-sizing:border-box;box-shadow:2px 2px 2px rgba(0,0,0,0.15)"></div>
<div style="position:absolute;left:446.5px;top:334.7px;width:1px;height:98px;background:#fbfbfb"></div>
<div style="position:absolute;left:447px;top:359px;width:101px;height:1px;background:#d7d7d7"></div>
<div style="position:absolute;left:447px;top:360px;width:101px;height:1px;background:#fbfbfb"></div>
<div style="position:absolute;left:421.5px;top:363px;width:122px;height:19.6px;background:#91c9f7"></div>
<div style="position:absolute;left:447px;top:385px;width:101px;height:1px;background:#d7d7d7"></div>
<div style="position:absolute;left:447px;top:386px;width:101px;height:1px;background:#fbfbfb"></div>
<div class="t" style="left:451px;top:337.83px;transform:scaleX(0.9013);"><u>O</u>pen</div>
<div class="t" style="left:451px;top:363.83px;transform:scaleX(0.8586);">All Tas<u>k</u>s</div>
<svg style="left:534px;top:368px" width="5" height="9" viewBox="0 0 5 9"><path d="M0.8 0.8 L4 4.2 L0.8 7.6" fill="none" stroke="#404040" stroke-width="1.1"/></svg>
<div class="t" style="left:451px;top:390.83px;transform:scaleX(0.9596);">Cu<u>t</u></div>
<div class="t" style="left:451px;top:410.83px;transform:scaleX(0.9301);"><u>C</u>opy</div>
<div style="position:absolute;left:544px;top:360.2px;width:120px;height:50.8px;background:#f0f0f0;border:1px solid #cccccc;box-sizing:border-box;box-shadow:2px 2px 2px rgba(0,0,0,0.15)"></div>
<div style="position:absolute;left:571.5px;top:361.5px;width:1px;height:48px;background:#fbfbfb"></div>
<div style="position:absolute;left:572px;top:385px;width:89px;height:1px;background:#d7d7d7"></div>
<div style="position:absolute;left:572px;top:386px;width:89px;height:1px;background:#fbfbfb"></div>
<div style="position:absolute;left:546.3px;top:389px;width:114.7px;height:20px;background:#91c9f7"></div>
<div class="t" style="left:576px;top:363.83px;transform:scaleX(0.9013);"><u>O</u>pen</div>
<div class="t" style="left:576px;top:390.83px;transform:scaleX(0.8741);"><u>E</u>xport...</div>
</div></body></html>
